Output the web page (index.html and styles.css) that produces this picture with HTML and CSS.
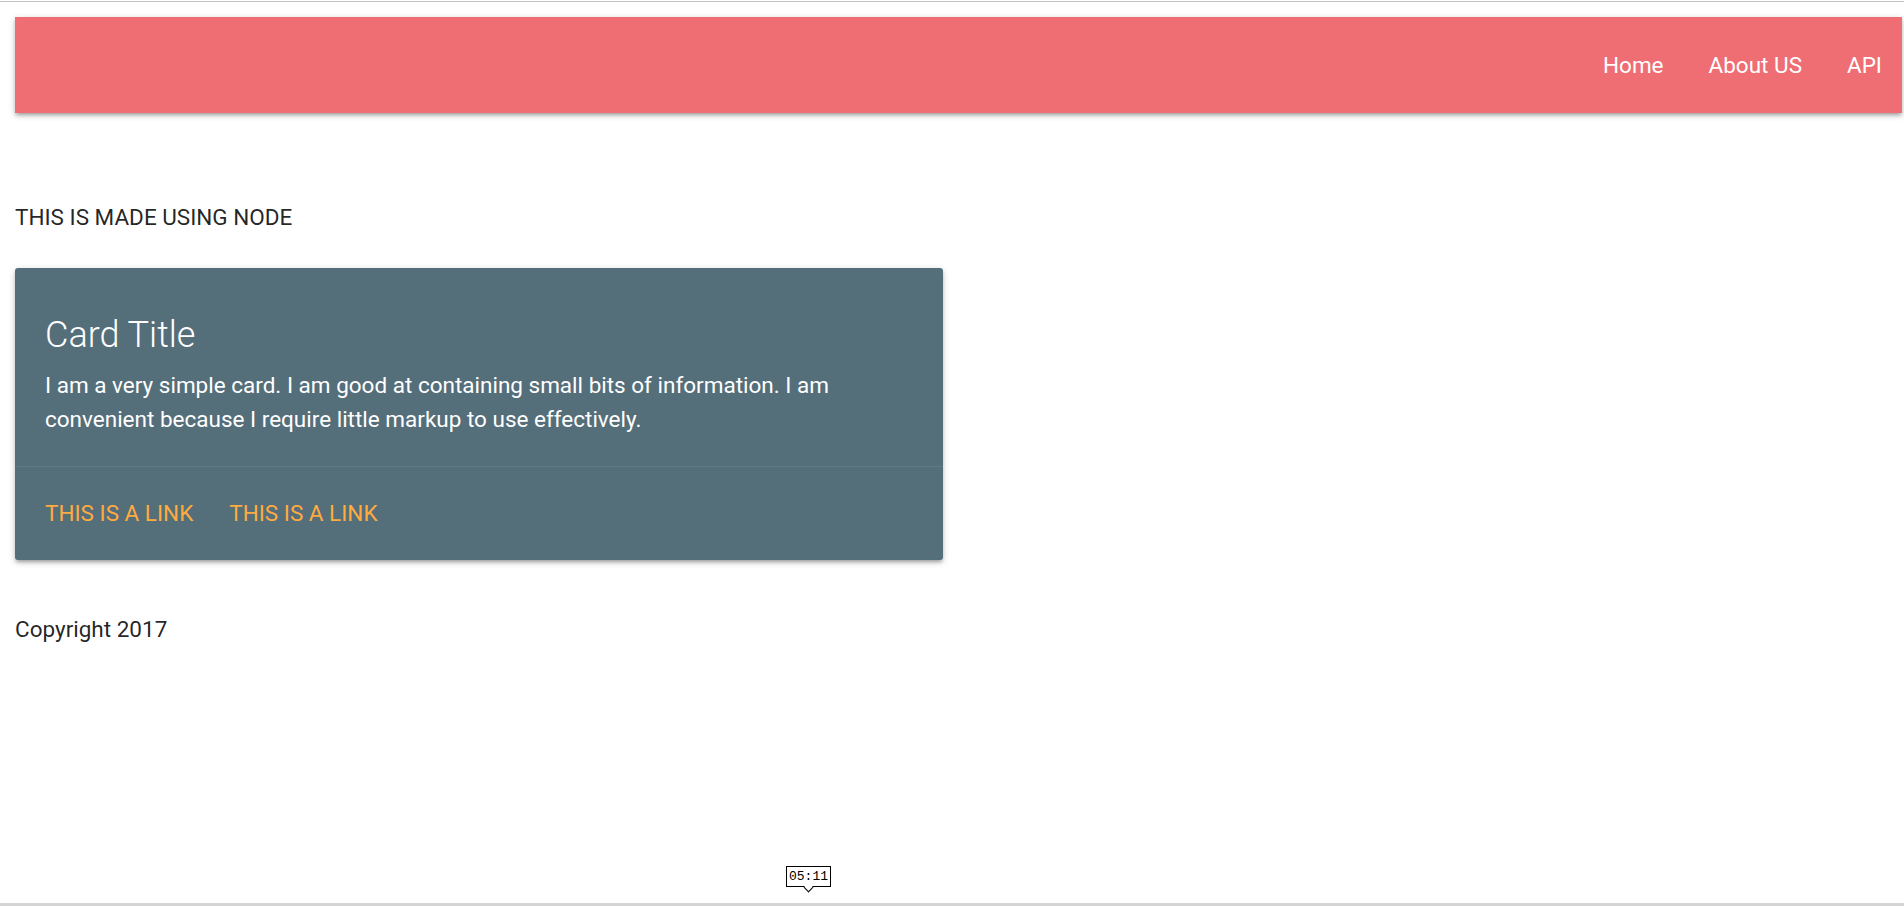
FILE: index.html
```html
<!DOCTYPE html>
<html lang="en">
<head>
<meta charset="utf-8">
<title>Node page</title>
<link rel="stylesheet" href="styles.css">
</head>
<body>
<div class="screen">
  <div class="top-rule"></div>
  <div class="page">
    <nav class="navbar">
      <ul class="nav-links">
        <li><a href="#">Home</a></li>
        <li><a href="#">About US</a></li>
        <li><a href="#">API</a></li>
      </ul>
    </nav>
    <p class="intro">THIS IS MADE USING NODE</p>
    <div class="card">
      <div class="card-content">
        <span class="card-title">Card Title</span>
        <p class="card-text">I am a very simple card. I am good at containing small bits of information. I am convenient because I require little markup to use effectively.</p>
      </div>
      <div class="card-action">
        <a href="#">THIS IS A LINK</a>
        <a href="#">THIS IS A LINK</a>
      </div>
    </div>
    <footer class="footer">Copyright 2017</footer>
  </div>
  <div class="bottom-rule"></div>
  <div class="time-tip">05:11</div>
</div>
</body>
</html>
```
FILE: styles.css
```css
* { box-sizing: border-box; }
html, body { margin: 0; padding: 0; }
body {
  font-family: Roboto, "Liberation Sans", sans-serif;
  color: rgba(0,0,0,0.87);
  background: #fff;
}
.screen {
  position: relative;
  height: 906px;
  display: flex;
  flex-direction: column;
  overflow: hidden;
}
.top-rule {
  height: 1px;
  margin-top: 1px;
  background: #c3c3c3;
}
.page {
  padding: 15px 2px 0 15px;
  flex: 1;
}
.navbar {
  height: 96px;
  background: #ee6e73;
  box-shadow: 0 3px 3px 0 rgba(0,0,0,0.14), 0 4px 2px -3px rgba(0,0,0,0.12), 0 2px 7px 0 rgba(0,0,0,0.2);
  display: flex;
  justify-content: flex-end;
}
.nav-links {
  list-style: none;
  margin: 0;
  padding: 0;
  display: flex;
}
.nav-links a {
  display: block;
  line-height: 96px;
  padding: 0 22.5px;
  color: #fff;
  text-decoration: none;
  font-size: 22.5px;
}
.nav-links li:last-child a { padding-right: 20px; }
.intro {
  margin: 88px 0 0 0;
  font-size: 22.5px;
  line-height: 33.75px;
}
.card {
  margin-top: 33px;
  width: 928px;
  background: #546e7a;
  color: #fff;
  border-radius: 3px;
  box-shadow: 0 3px 3px 0 rgba(0,0,0,0.14), 0 4px 2px -3px rgba(0,0,0,0.12), 0 2px 7px 0 rgba(0,0,0,0.2);
}
.card-content {
  padding: 43px 30px 30px 30px;
}
.card-title {
  display: block;
  font-size: 36px;
  font-weight: 300;
  line-height: 48px;
  margin-bottom: 10px;
}
.card-text {
  margin: 0;
  font-size: 22.5px;
  line-height: 33.75px;
}
.card-action {
  border-top: 1px solid rgba(160,160,160,0.2);
  padding: 30px 30px 29px 30px;
  display: flex;
  gap: 36px;
}
.card-action a {
  color: #ffab40;
  text-decoration: none;
  font-size: 22.5px;
  line-height: 33.75px;
}
.footer {
  margin-top: 53px;
  font-size: 22.5px;
  line-height: 33.75px;
}
.bottom-rule {
  height: 3px;
  background: #d4d4d4;
}
.time-tip {
  position: absolute;
  left: 786px;
  top: 866px;
  border: 1px solid #000;
  background: #fff;
  font-family: "Liberation Mono", monospace;
  font-size: 13px;
  line-height: 19px;
  padding: 0 2px;
  color: #000;
}
.time-tip::after {
  content: "";
  position: absolute;
  left: 50%;
  bottom: -5px;
  margin-left: -4px;
  width: 6px;
  height: 6px;
  background: #fff;
  border-right: 1px solid #000;
  border-bottom: 1px solid #000;
  transform: rotate(45deg);
}
```
